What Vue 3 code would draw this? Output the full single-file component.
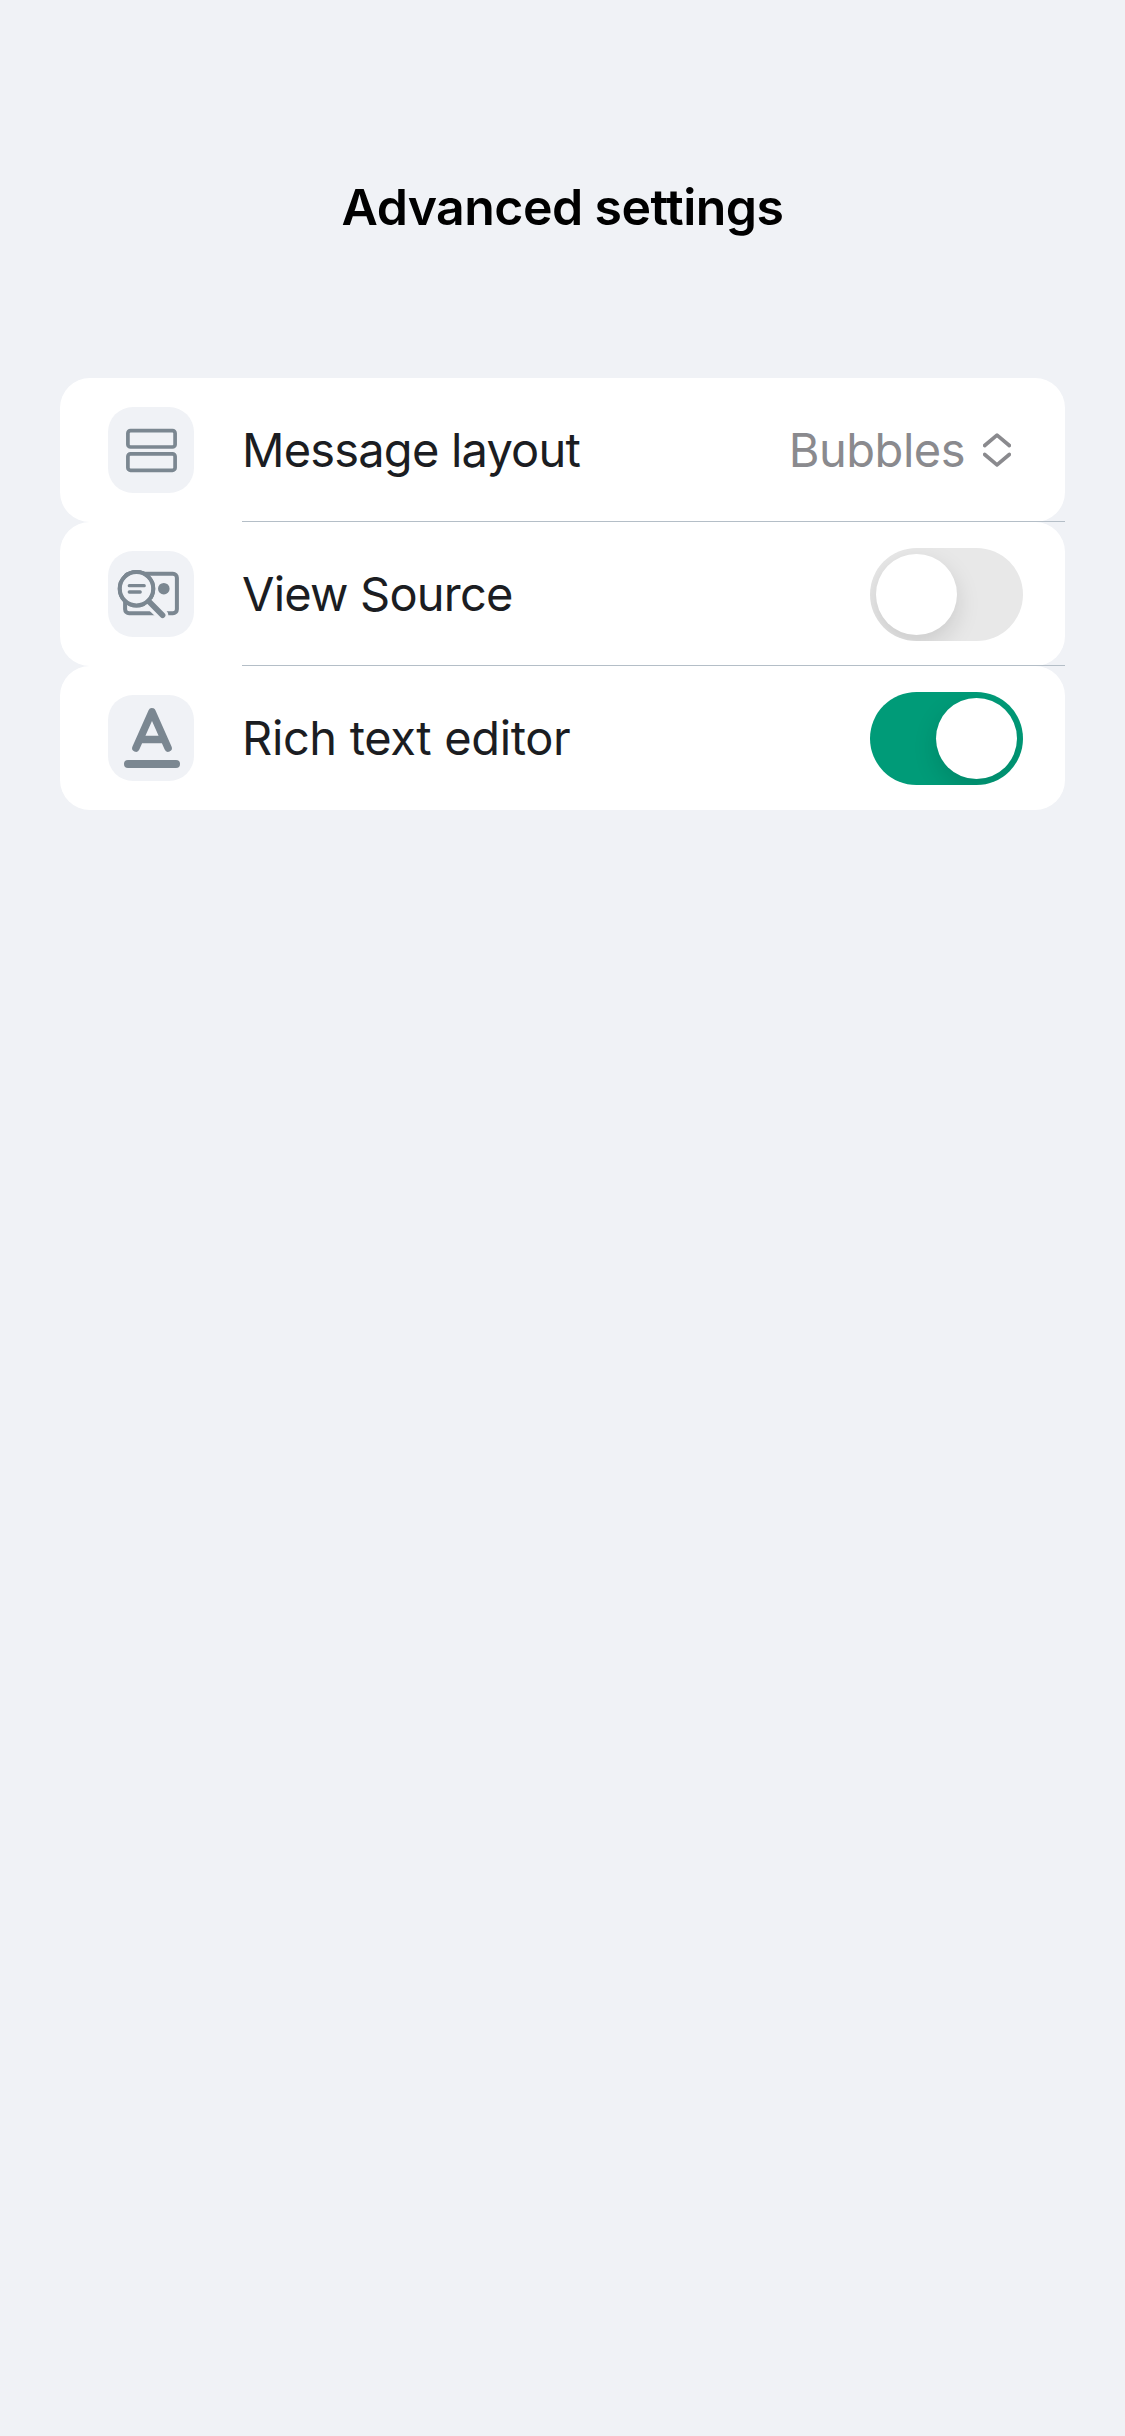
<script setup>
import { ref } from 'vue'

const rows = ref([
  { id: 'layout', label: 'Message layout', value: 'Bubbles' },
  { id: 'source', label: 'View Source', on: false },
  { id: 'editor', label: 'Rich text editor', on: true },
])
</script>

<template>
  <main class="screen">
    <header class="nav">
      <h1 class="title">Advanced settings</h1>
    </header>
    <section class="list">
      <div v-for="row in rows" :key="row.id" class="row" :class="row.id">
        <span class="tile">
          <svg v-if="row.id === 'layout'" class="icon" viewBox="0 0 86 86">
            <rect x="19.9" y="23.6" width="47.2" height="16.4" rx="2.6" stroke-width="3.7" />
            <rect x="19.9" y="46.9" width="47.2" height="16.4" rx="2.6" stroke-width="3.7" />
          </svg>
          <svg v-else-if="row.id === 'source'" class="icon" viewBox="0 0 86 86">
            <rect x="17.1" y="22.8" width="51.8" height="39.4" rx="4" stroke-width="4" />
            <circle class="under" cx="28.5" cy="37.7" r="17" stroke-width="3.6" />
            <path class="gap" d="M43 53.4 54.6 64.3" stroke-width="11.5" />
            <circle cx="28.5" cy="37.7" r="16.7" stroke-width="4" />
            <path d="M21.3 34.7H36.2M21.3 41H32.2" stroke-width="3.3" />
            <circle class="dot" cx="55.8" cy="37.7" r="5.8" />
            <path d="M41 50.5 54.6 64.3" stroke-width="5.6" />
          </svg>
          <svg v-else class="icon" viewBox="0 0 86 86">
            <path d="M27.9 53.1 44 16.8 60.1 53.1M33 44.4H55" stroke-width="7.5" />
            <path d="M20 69H68" stroke-width="8" />
          </svg>
        </span>
        <span class="label">{{ row.label }}</span>
        <span v-if="row.value" class="picker">
          <span class="value">{{ row.value }}</span>
          <svg class="chevrons" viewBox="0 0 28 34">
            <path d="M1.7 12.5 14 2.2 26.3 12.5M1.7 21.5 14 31.8 26.3 21.5" />
          </svg>
        </span>
        <button v-else class="toggle" :class="{ on: row.on }" @click="row.on = !row.on">
          <span class="knob"></span>
        </button>
      </div>
    </section>
  </main>
</template>

<style>
body {
  background: #f0f2f6;
}
</style>

<style scoped>
.screen {
  box-sizing: border-box;
  min-height: 2436px;
  padding: 132px 60px 0;
  background: #f0f2f6;
  font-family: Inter, "Liberation Sans", sans-serif;
}
.nav {
  display: flex;
  align-items: center;
  justify-content: center;
  height: 150px;
  margin-bottom: 96px;
}
.title {
  margin: 0;
  font-size: 50px;
  line-height: 60px;
  font-weight: 600;
  letter-spacing: -0.55px;
  color: #000;
}
.row {
  position: relative;
  box-sizing: border-box;
  display: flex;
  align-items: center;
  height: 144px;
  padding: 0 42px 0 48px;
  border-radius: 30px;
  background: #fff;
}
.row:not(:last-child)::after {
  content: "";
  position: absolute;
  right: 0;
  bottom: 0;
  left: 182px;
  height: 1px;
  background: #b4bec7;
}
.tile {
  flex: none;
  width: 86px;
  height: 86px;
  border-radius: 25px;
  background: #f0f2f6;
}
.icon {
  display: block;
  width: 86px;
  height: 86px;
  fill: none;
  stroke: #7b8791;
  stroke-linecap: round;
  stroke-linejoin: round;
}
.icon .under {
  fill: #f0f2f6;
}
.icon .gap {
  stroke: #f0f2f6;
}
.icon .dot {
  fill: #7b8791;
  stroke: none;
}
.label {
  flex: 1;
  margin-left: 48px;
  font-size: 47px;
  line-height: 60px;
  letter-spacing: -0.8px;
  color: #1b1d22;
}
.editor .label {
  letter-spacing: -0.37px;
}
.picker {
  display: flex;
  align-items: center;
  gap: 18px;
  margin-right: 12px;
}
.value {
  font-size: 47px;
  line-height: 60px;
  letter-spacing: -0.5px;
  color: #8a8a8e;
}
.chevrons {
  width: 28px;
  height: 34px;
  fill: none;
  stroke: #8a8a8e;
  stroke-width: 3.7;
  stroke-linecap: round;
  stroke-linejoin: round;
}
.toggle {
  display: flex;
  width: 153px;
  height: 93px;
  padding: 6px;
  border: 0;
  border-radius: 47px;
  background: #e8e8e8;
  overflow: hidden;
}
.toggle.on {
  justify-content: flex-end;
  background: #009b78;
}
.knob {
  width: 81px;
  height: 81px;
  border-radius: 50%;
  background: #fff;
  box-shadow: 0 9px 24px rgba(0, 0, 0, 0.13);
}
</style>
